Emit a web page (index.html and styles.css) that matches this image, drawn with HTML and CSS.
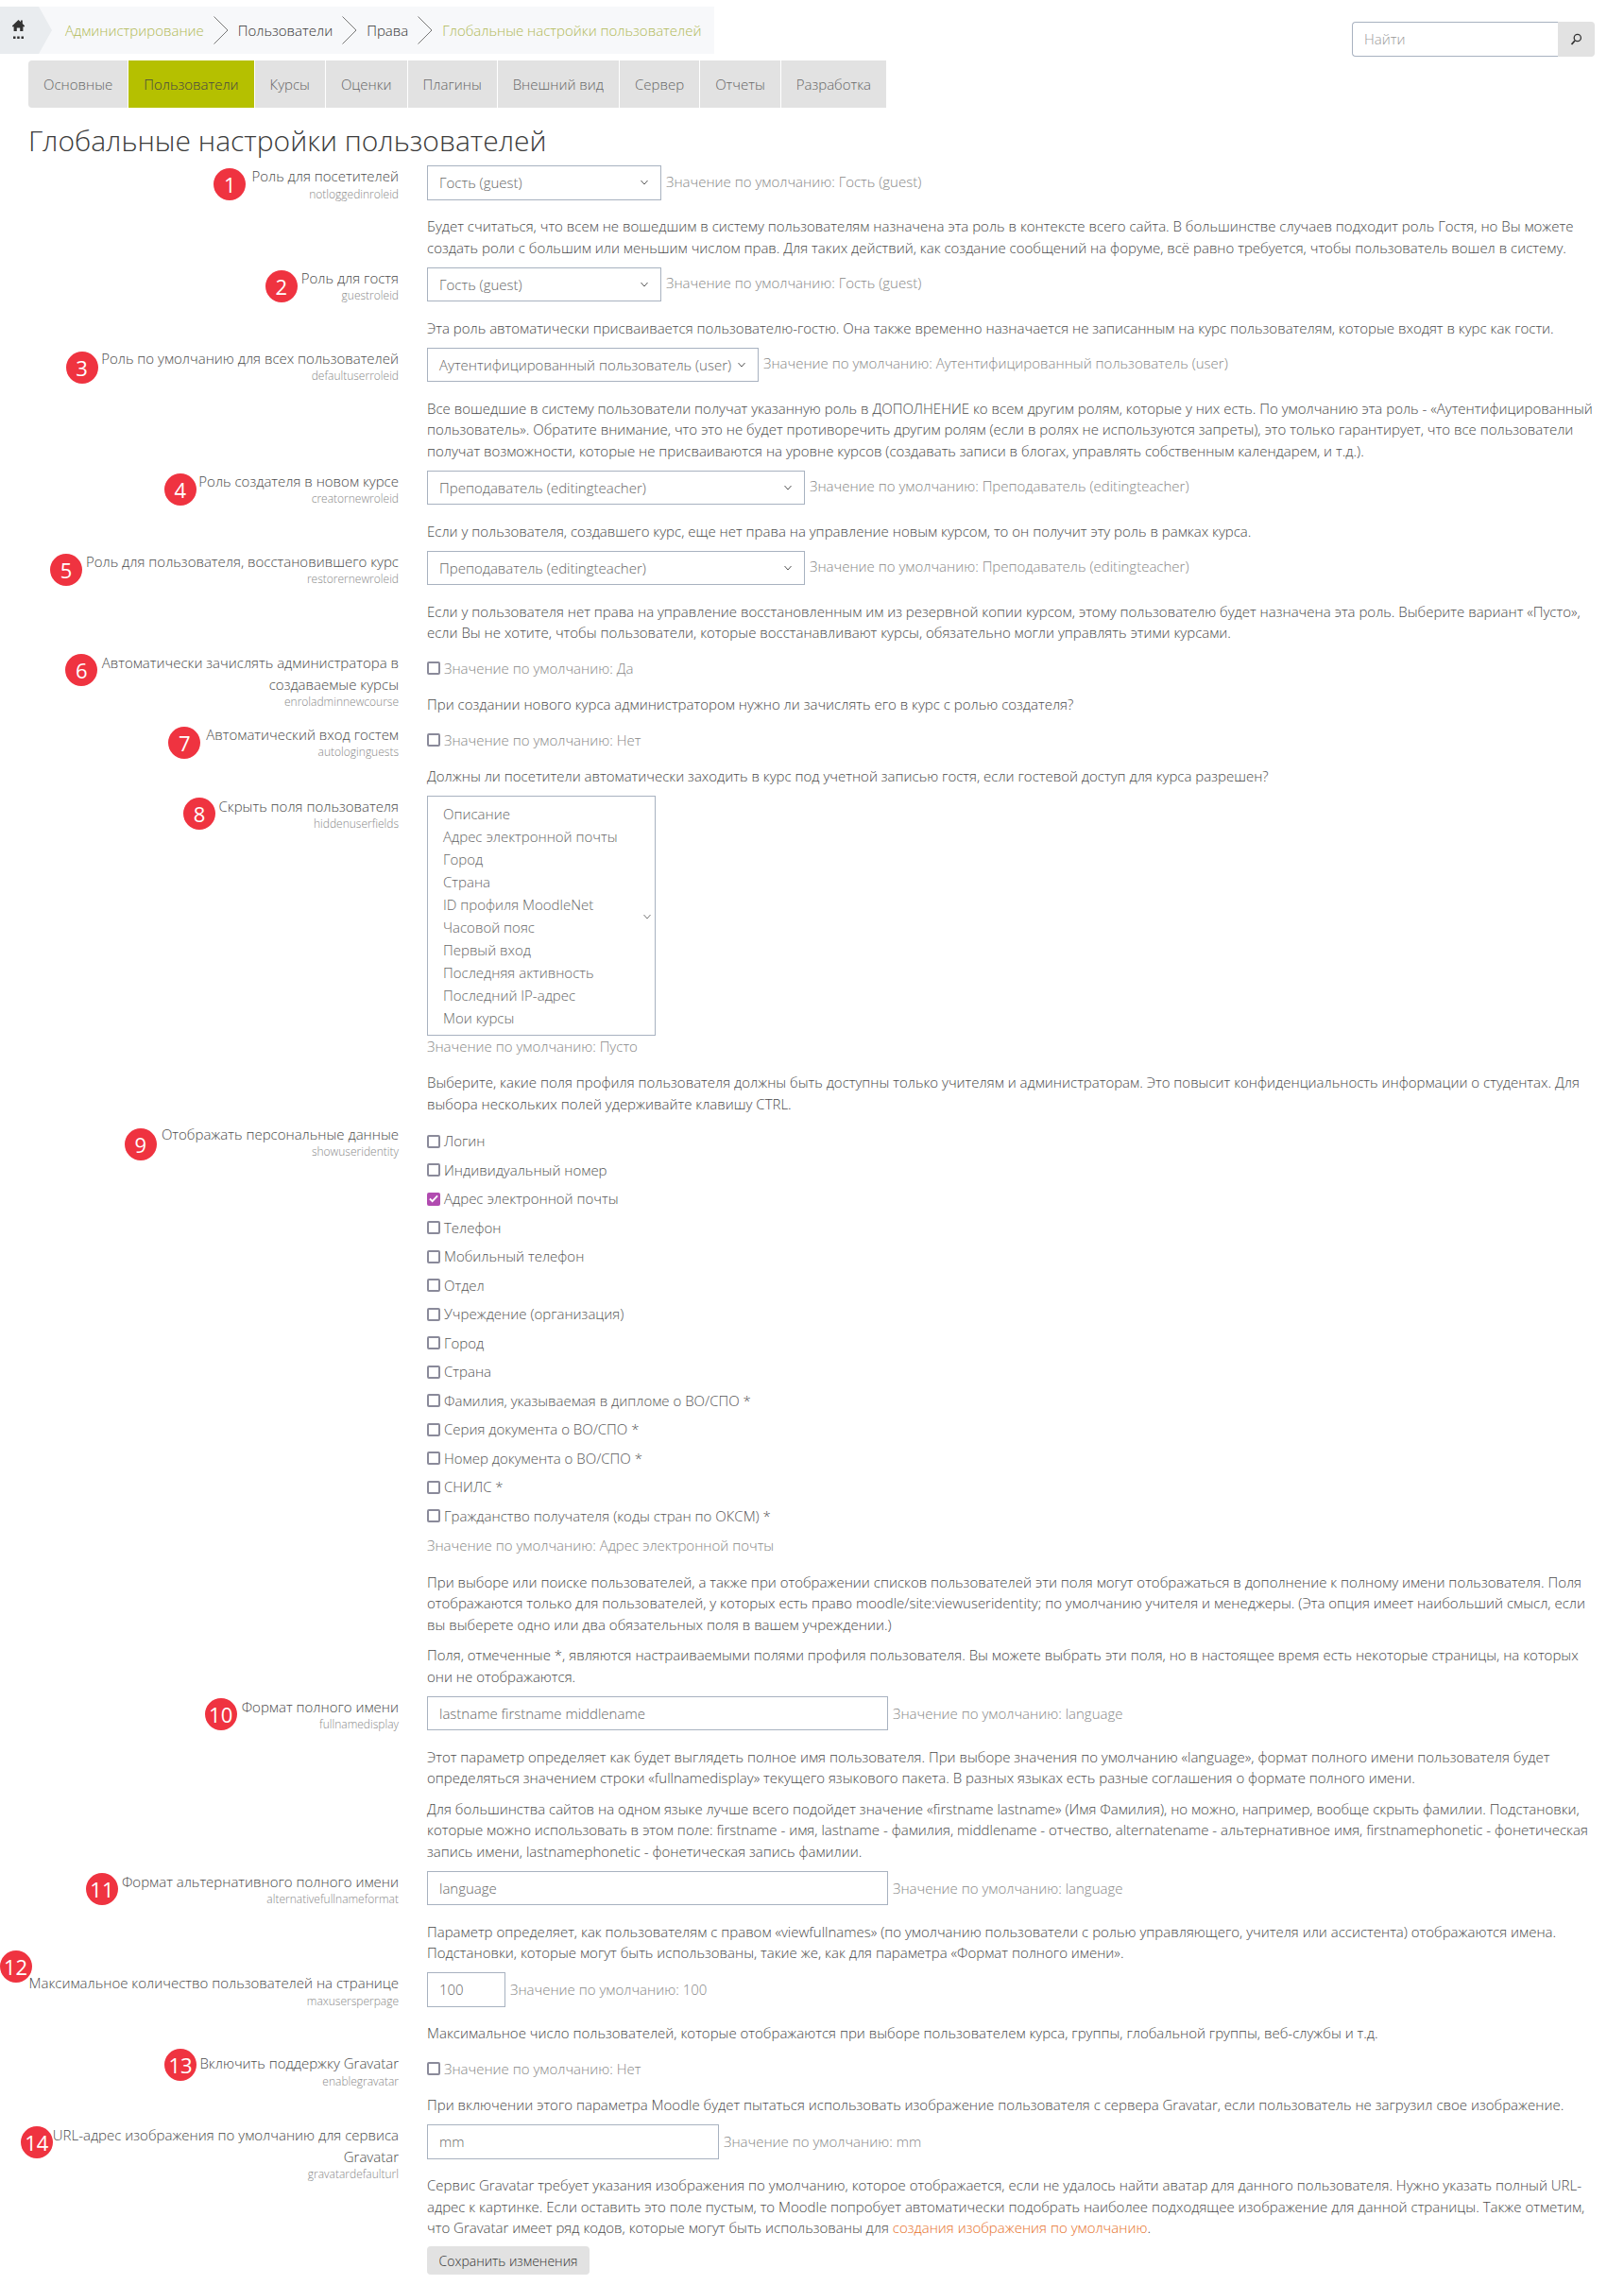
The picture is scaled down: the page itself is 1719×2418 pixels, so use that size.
FILE: index.html
```html
<!DOCTYPE html>
<html lang="ru">
<head>
<meta charset="utf-8">
<title>Глобальные настройки пользователей</title>
<link rel="stylesheet" href="styles.css">
</head>
<body>
<header class="top">
  <nav class="crumbs">
    <a class="home"><svg width="13" height="22" viewBox="0 0 13 22"><path fill="#333" d="M6.5 0 0 6.2v1h1.6V12h3.2V8.6h3.4V12h3.2V7.200h1.600v-1L10.800 4V.6H9v1.700zM1 17.500h2.500V20H1zM5.200 17.500h2.500V20H5.200zM9.500 17.500H12V20H9.500z"/></svg></a>
    <a class="crumb link">Администрирование</a>
    <svg class="sep" width="16" height="30" viewBox="0 0 16 30"><path d="M.5.500 15 15 .5 29.500" fill="none" stroke="#777"/></svg>
    <a class="crumb">Пользователи</a>
    <svg class="sep" width="16" height="30" viewBox="0 0 16 30"><path d="M.5.500 15 15 .5 29.500" fill="none" stroke="#777"/></svg>
    <a class="crumb">Права</a>
    <svg class="sep" width="16" height="30" viewBox="0 0 16 30"><path d="M.5.500 15 15 .5 29.500" fill="none" stroke="#777"/></svg>
    <a class="crumb link">Глобальные настройки пользователей</a>
  </nav>
  <form class="search">
    <span class="search-input">Найти</span>
    <span class="search-btn"><svg width="13" height="13" viewBox="0 0 13 13"><circle cx="7.800" cy="5" r="3.600" fill="none" stroke="#333" stroke-width="1.300"/><path d="M5 8 1.500 12" stroke="#333" stroke-width="1.800"/></svg></span>
  </form>
</header>

<ul class="tabs">
  <li class="tab first">Основные</li>
  <li class="tab active">Пользователи</li>
  <li class="tab">Курсы</li>
  <li class="tab">Оценки</li>
  <li class="tab">Плагины</li>
  <li class="tab">Внешний вид</li>
  <li class="tab">Сервер</li>
  <li class="tab">Отчеты</li>
  <li class="tab">Разработка</li>
</ul>

<main class="page">
  <h1 class="title">Глобальные настройки пользователей</h1>

  <section class="row">
    <div class="label"><div class="name"><span class="badge b1">1</span>Роль для посетителей</div><div class="key">notloggedinroleid</div></div>
    <div class="body">
      <div class="control"><div class="select s248">Гость (guest)<svg class="chev" width="8" height="6" viewBox="0 0 8 6"><path d="M.5 1 4 5l3.500-4" fill="none" stroke="#555"/></svg></div><span class="def">Значение по умолчанию: Гость (guest)</span></div>
      <div class="desc"><p>Будет считаться, что всем не вошедшим в систему пользователям назначена эта роль в контексте всего сайта. В большинстве случаев подходит роль Гостя, но Вы можете создать роли с большим или меньшим числом прав. Для таких действий, как создание сообщений на форуме, всё равно требуется, чтобы пользователь вошел в систему.</p></div>
    </div>
  </section>

  <section class="row">
    <div class="label"><div class="name"><span class="badge b2">2</span>Роль для гостя</div><div class="key">guestroleid</div></div>
    <div class="body">
      <div class="control"><div class="select s248">Гость (guest)<svg class="chev" width="8" height="6" viewBox="0 0 8 6"><path d="M.5 1 4 5l3.500-4" fill="none" stroke="#555"/></svg></div><span class="def">Значение по умолчанию: Гость (guest)</span></div>
      <div class="desc"><p>Эта роль автоматически присваивается пользователю-гостю. Она также временно назначается не записанным на курс пользователям, которые входят в курс как гости.</p></div>
    </div>
  </section>

  <section class="row">
    <div class="label"><div class="name"><span class="badge b3">3</span>Роль по умолчанию для всех пользователей</div><div class="key">defaultuserroleid</div></div>
    <div class="body">
      <div class="control"><div class="select s351">Аутентифицированный пользователь (user)<svg class="chev" width="8" height="6" viewBox="0 0 8 6"><path d="M.5 1 4 5l3.500-4" fill="none" stroke="#555"/></svg></div><span class="def">Значение по умолчанию: Аутентифицированный пользователь (user)</span></div>
      <div class="desc"><p>Все вошедшие в систему пользователи получат указанную роль в ДОПОЛНЕНИЕ ко всем другим ролям, которые у них есть. По умолчанию эта роль - «Аутентифицированный пользователь». Обратите внимание, что это не будет противоречить другим ролям (если в ролях не используются запреты), это только гарантирует, что все пользователи получат возможности, которые не присваиваются на уровне курсов (создавать записи в блогах, управлять собственным календарем, и т.д.).</p></div>
    </div>
  </section>

  <section class="row">
    <div class="label"><div class="name"><span class="badge b4">4</span>Роль создателя в новом курсе</div><div class="key">creatornewroleid</div></div>
    <div class="body">
      <div class="control"><div class="select s400">Преподаватель (editingteacher)<svg class="chev" width="8" height="6" viewBox="0 0 8 6"><path d="M.5 1 4 5l3.500-4" fill="none" stroke="#555"/></svg></div><span class="def">Значение по умолчанию: Преподаватель (editingteacher)</span></div>
      <div class="desc"><p>Если у пользователя, создавшего курс, еще нет права на управление новым курсом, то он получит эту роль в рамках курса.</p></div>
    </div>
  </section>

  <section class="row">
    <div class="label"><div class="name"><span class="badge b5">5</span>Роль для пользователя, восстановившего курс</div><div class="key">restorernewroleid</div></div>
    <div class="body">
      <div class="control"><div class="select s400">Преподаватель (editingteacher)<svg class="chev" width="8" height="6" viewBox="0 0 8 6"><path d="M.5 1 4 5l3.500-4" fill="none" stroke="#555"/></svg></div><span class="def">Значение по умолчанию: Преподаватель (editingteacher)</span></div>
      <div class="desc"><p>Если у пользователя нет права на управление восстановленным им из резервной копии курсом, этому пользователю будет назначена эта роль. Выберите вариант «Пусто», если Вы не хотите, чтобы пользователи, которые восстанавливают курсы, обязательно могли управлять этими курсами.</p></div>
    </div>
  </section>

  <section class="row">
    <div class="label"><div class="name"><span class="badge b6">6</span>Автоматически зачислять администратора в создаваемые курсы</div><div class="key">enroladminnewcourse</div></div>
    <div class="body">
      <div class="check-line"><span class="box"></span><span class="def">Значение по умолчанию: Да</span></div>
      <div class="desc near"><p>При создании нового курса администратором нужно ли зачислять его в курс с ролью создателя?</p></div>
    </div>
  </section>

  <section class="row">
    <div class="label"><div class="name"><span class="badge b7">7</span>Автоматический вход гостем</div><div class="key">autologinguests</div></div>
    <div class="body">
      <div class="check-line"><span class="box"></span><span class="def">Значение по умолчанию: Нет</span></div>
      <div class="desc near"><p>Должны ли посетители автоматически заходить в курс под учетной записью гостя, если гостевой доступ для курса разрешен?</p></div>
    </div>
  </section>

  <section class="row">
    <div class="label"><div class="name"><span class="badge b8">8</span>Скрыть поля пользователя</div><div class="key">hiddenuserfields</div></div>
    <div class="body">
      <div class="listbox">
        <div>Описание</div><div>Адрес электронной почты</div><div>Город</div><div>Страна</div><div>ID профиля MoodleNet</div><div>Часовой пояс</div><div>Первый вход</div><div>Последняя активность</div><div>Последний IP-адрес</div><div>Мои курсы</div>
        <svg class="list-chev" width="8" height="6" viewBox="0 0 8 6"><path d="M.5 1 4 5l3.500-4" fill="none" stroke="#777"/></svg>
      </div>
      <div class="def block">Значение по умолчанию: Пусто</div>
      <div class="desc near"><p>Выберите, какие поля профиля пользователя должны быть доступны только учителям и администраторам. Это повысит конфиденциальность информации о студентах. Для выбора нескольких полей удерживайте клавишу CTRL.</p></div>
    </div>
  </section>

  <section class="row">
    <div class="label"><div class="name"><span class="badge b9">9</span>Отображать персональные данные</div><div class="key">showuseridentity</div></div>
    <div class="body">
      <ul class="checks">
        <li><span class="box"></span>Логин</li>
        <li><span class="box"></span>Индивидуальный номер</li>
        <li><span class="box on"><svg width="11" height="9" viewBox="0 0 11 9"><path d="M1 4.500 4 7.500 10 1" fill="none" stroke="#fff" stroke-width="2"/></svg></span>Адрес электронной почты</li>
        <li><span class="box"></span>Телефон</li>
        <li><span class="box"></span>Мобильный телефон</li>
        <li><span class="box"></span>Отдел</li>
        <li><span class="box"></span>Учреждение (организация)</li>
        <li><span class="box"></span>Город</li>
        <li><span class="box"></span>Страна</li>
        <li><span class="box"></span>Фамилия, указываемая в дипломе о ВО/СПО *</li>
        <li><span class="box"></span>Серия документа о ВО/СПО *</li>
        <li><span class="box"></span>Номер документа о ВО/СПО *</li>
        <li><span class="box"></span>СНИЛС *</li>
        <li><span class="box"></span>Гражданство получателя (коды стран по ОКСМ) *</li>
      </ul>
      <div class="def block">Значение по умолчанию: Адрес электронной почты</div>
      <div class="desc"><p>При выборе или поиске пользователей, а также при отображении списков пользователей эти поля могут отображаться в дополнение к полному имени пользователя. Поля отображаются только для пользователей, у которых есть право moodle/site:viewuseridentity; по умолчанию учителя и менеджеры. (Эта опция имеет наибольший смысл, если вы выберете одно или два обязательных поля в вашем учреждении.)</p>
      <p>Поля, отмеченные *, являются настраиваемыми полями профиля пользователя. Вы можете выбрать эти поля, но в настоящее время есть некоторые страницы, на которых они не отображаются.</p></div>
    </div>
  </section>

  <section class="row">
    <div class="label"><div class="name"><span class="badge b10">10</span>Формат полного имени</div><div class="key">fullnamedisplay</div></div>
    <div class="body">
      <div class="control"><div class="input w488">lastname firstname middlename</div><span class="def">Значение по умолчанию: language</span></div>
      <div class="desc"><p>Этот параметр определяет как будет выглядеть полное имя пользователя. При выборе значения по умолчанию «language», формат полного имени пользователя будет определяться значением строки «fullnamedisplay» текущего языкового пакета. В разных языках есть разные соглашения о формате полного имени.</p>
      <p>Для большинства сайтов на одном языке лучше всего подойдет значение «firstname lastname» (Имя Фамилия), но можно, например, вообще скрыть фамилии. Подстановки, которые можно использовать в этом поле: firstname - имя, lastname - фамилия, middlename - отчество, alternatename - альтернативное имя, firstnamephonetic - фонетическая запись имени, lastnamephonetic - фонетическая запись фамилии.</p></div>
    </div>
  </section>

  <section class="row">
    <div class="label"><div class="name"><span class="badge b11">11</span>Формат альтернативного полного имени</div><div class="key">alternativefullnameformat</div></div>
    <div class="body">
      <div class="control"><div class="input w488">language</div><span class="def">Значение по умолчанию: language</span></div>
      <div class="desc"><p>Параметр определяет, как пользователям с правом «viewfullnames» (по умолчанию пользователи с ролью управляющего, учителя или ассистента) отображаются имена. Подстановки, которые могут быть использованы, такие же, как для параметра «Формат полного имени».</p></div>
    </div>
  </section>

  <section class="row">
    <div class="label"><div class="name"><span class="badge b12">12</span>Максимальное количество пользователей на странице</div><div class="key">maxusersperpage</div></div>
    <div class="body">
      <div class="control"><div class="input w84">100</div><span class="def">Значение по умолчанию: 100</span></div>
      <div class="desc"><p>Максимальное число пользователей, которые отображаются при выборе пользователем курса, группы, глобальной группы, веб-службы и т.д.</p></div>
    </div>
  </section>

  <section class="row">
    <div class="label"><div class="name"><span class="badge b13">13</span>Включить поддержку Gravatar</div><div class="key">enablegravatar</div></div>
    <div class="body">
      <div class="check-line"><span class="box"></span><span class="def">Значение по умолчанию: Нет</span></div>
      <div class="desc near"><p>При включении этого параметра Moodle будет пытаться использовать изображение пользователя с сервера Gravatar, если пользователь не загрузил свое изображение.</p></div>
    </div>
  </section>

  <section class="row">
    <div class="label"><div class="name"><span class="badge b14">14</span>URL-адрес изображения по умолчанию для сервиса Gravatar</div><div class="key">gravatardefaulturl</div></div>
    <div class="body">
      <div class="control"><div class="input w309">mm</div><span class="def">Значение по умолчанию: mm</span></div>
      <div class="desc"><p>Сервис Gravatar требует указания изображения по умолчанию, которое отображается, если не удалось найти аватар для данного пользователя. Нужно указать полный URL-адрес к картинке. Если оставить это поле пустым, то Moodle попробует автоматически подобрать наиболее подходящее изображение для данной страницы. Также отметим, что Gravatar имеет ряд кодов, которые могут быть использованы для <a class="ext">создания изображения по умолчанию</a>.</p></div>
    </div>
  </section>

  <div class="actions"><button class="save" type="button">Сохранить изменения</button></div>
</main>
</body>
</html>
```

FILE: styles.css
```css
* { box-sizing: border-box; }
html, body { margin: 0; padding: 0; }
body {
  font-family: "Open Sans", sans-serif;
  font-size: 15px;
  font-weight: 300;
  line-height: 22.5px;
  color: #4a4a4a;
  background: #fff;
}
p { margin: 0 0 10px; }
p:last-child { margin-bottom: 0; }
ul { list-style: none; margin: 0; padding: 0; }

.top { display: flex; justify-content: space-between; align-items: flex-start; padding: 7px 31px 0 0; height: 64px; }
.crumbs { display: flex; align-items: center; width: 756px; height: 50px; background: #f7f8fa; padding-right: 15px; }
.home {
  width: 55px; height: 50px; margin-right: 14px; flex: none;
  background: #e9ecef;
  clip-path: polygon(0 0, 41px 0, 55px 25px, 41px 50px, 0 50px);
  display: flex; align-items: center; padding-left: 13px;
}
.crumb { white-space: nowrap; color: #333; }
.crumb.link { color: #b1b956; }
.sep { margin: 0 10px; flex: none; }
.search { display: flex; width: 257px; height: 37px; margin-top: 16px; }
.search-input { flex: 1; border: 1px solid #a8b2c0; border-right: 0; border-radius: 4px 0 0 4px; padding: 0 12px; line-height: 35px; color: #999; }
.search-btn { width: 39px; background: #e2e2e2; border-radius: 0 4px 4px 0; display: flex; align-items: center; justify-content: center; }

.tabs { display: flex; margin-left: 30px; width: 908px; height: 50px; }
.tab { flex: auto; text-align: center; line-height: 50px; background: #e2e2e2; border-right: 1px solid #fff; color: #666; white-space: nowrap; }
.tab:last-child { border-right: 0; }
.tab.first { border-radius: 4px 0 0 4px; }
.tab.active { background: #b5c000; color: #444; }

.page { padding: 0 32px 10px 30px; }
.title { margin: 17px 0 8px; font-size: 30px; line-height: 36px; font-weight: 300; color: #3a3a3a; }

.row { display: flex; gap: 30px; padding-bottom: 9.5px; }
.label { width: 392px; flex: none; text-align: right; }
.key { font-size: 12px; line-height: 14px; padding-top: 1px; color: #888; }
.body { flex: 1; min-width: 0; }
.desc { margin-top: 16.5px; }
.desc.near { margin-top: 15.5px; }

.badge {
  position: absolute;
  width: 34px; height: 34px; margin: 3px 0 0 -38px;
  background: #ef3340; color: #fff; border-radius: 50%;
  font-size: 22px; line-height: 34px; text-align: center; font-weight: 400;
}
.b1 { margin-left: -40px; }
.b3 { margin-top: 4px; margin-left: -37.5px; }
.b4 { margin-left: -36.5px; }
.b6 { margin-top: 2px; margin-left: -38.5px; }
.b7 { margin-left: -40px; }
.b8 { margin-top: 2px; margin-left: -37.5px; }
.b9 { margin-top: 5px; margin-left: -39px; }
.b10 { margin-top: 2px; margin-left: -39px; }
.b11 { margin-top: 2px; }
.b12 { margin-top: -23px; margin-left: -31px; }
.b13 { margin-top: -4px; margin-left: -37.5px; }
.b14 { margin-top: 2px; margin-left: -34px; }

.control { display: flex; align-items: center; gap: 5px; }
.select, .input {
  height: 36.5px; border: 1px solid #a8b2c0; padding: 0 12px; line-height: 34.5px;
  color: #666; white-space: nowrap; flex: none; position: relative;
}
.select + .def { margin-bottom: 3px; }
.chev { position: absolute; right: 13px; top: 14px; }
.s248 { width: 248px; }
.s351 { width: 351px; }
.s400 { width: 400px; }
.w488 { width: 488px; }
.w84 { width: 83px; }
.w309 { width: 309px; }
.def { color: #888; }
.def.block { display: block; }

.check-line { display: flex; align-items: center; gap: 4px; padding-top: 5.75px; }
.box { width: 14px; height: 14px; border: 2px solid #8a8a9a; border-radius: 2px; flex: none; display: inline-flex; align-items: center; justify-content: center; background: #fff; }
.box.on { background: #b14bb0; border-color: #b14bb0; }

.listbox { position: relative; width: 242px; height: 254.75px; border: 1px solid #a8b2c0; padding: 6px 16px; color: #666; }
.listbox div { height: 24px; line-height: 24px; }
.list-chev { position: absolute; right: 4px; top: 124px; }

.checks { padding-top: 7.5px; padding-bottom: 0.5px; }
.checks li { display: flex; align-items: center; gap: 4px; height: 22.5px; margin-bottom: 8px; color: #555; }
.actions { padding-left: 422px; margin-top: -1px; }
.save { height: 30px; width: 172px; border: 0; border-radius: 4px; background: #e2e2e2; color: #333; font: 300 14px "Open Sans", sans-serif; padding: 0; }
.ext { color: #e6712b; }
```
